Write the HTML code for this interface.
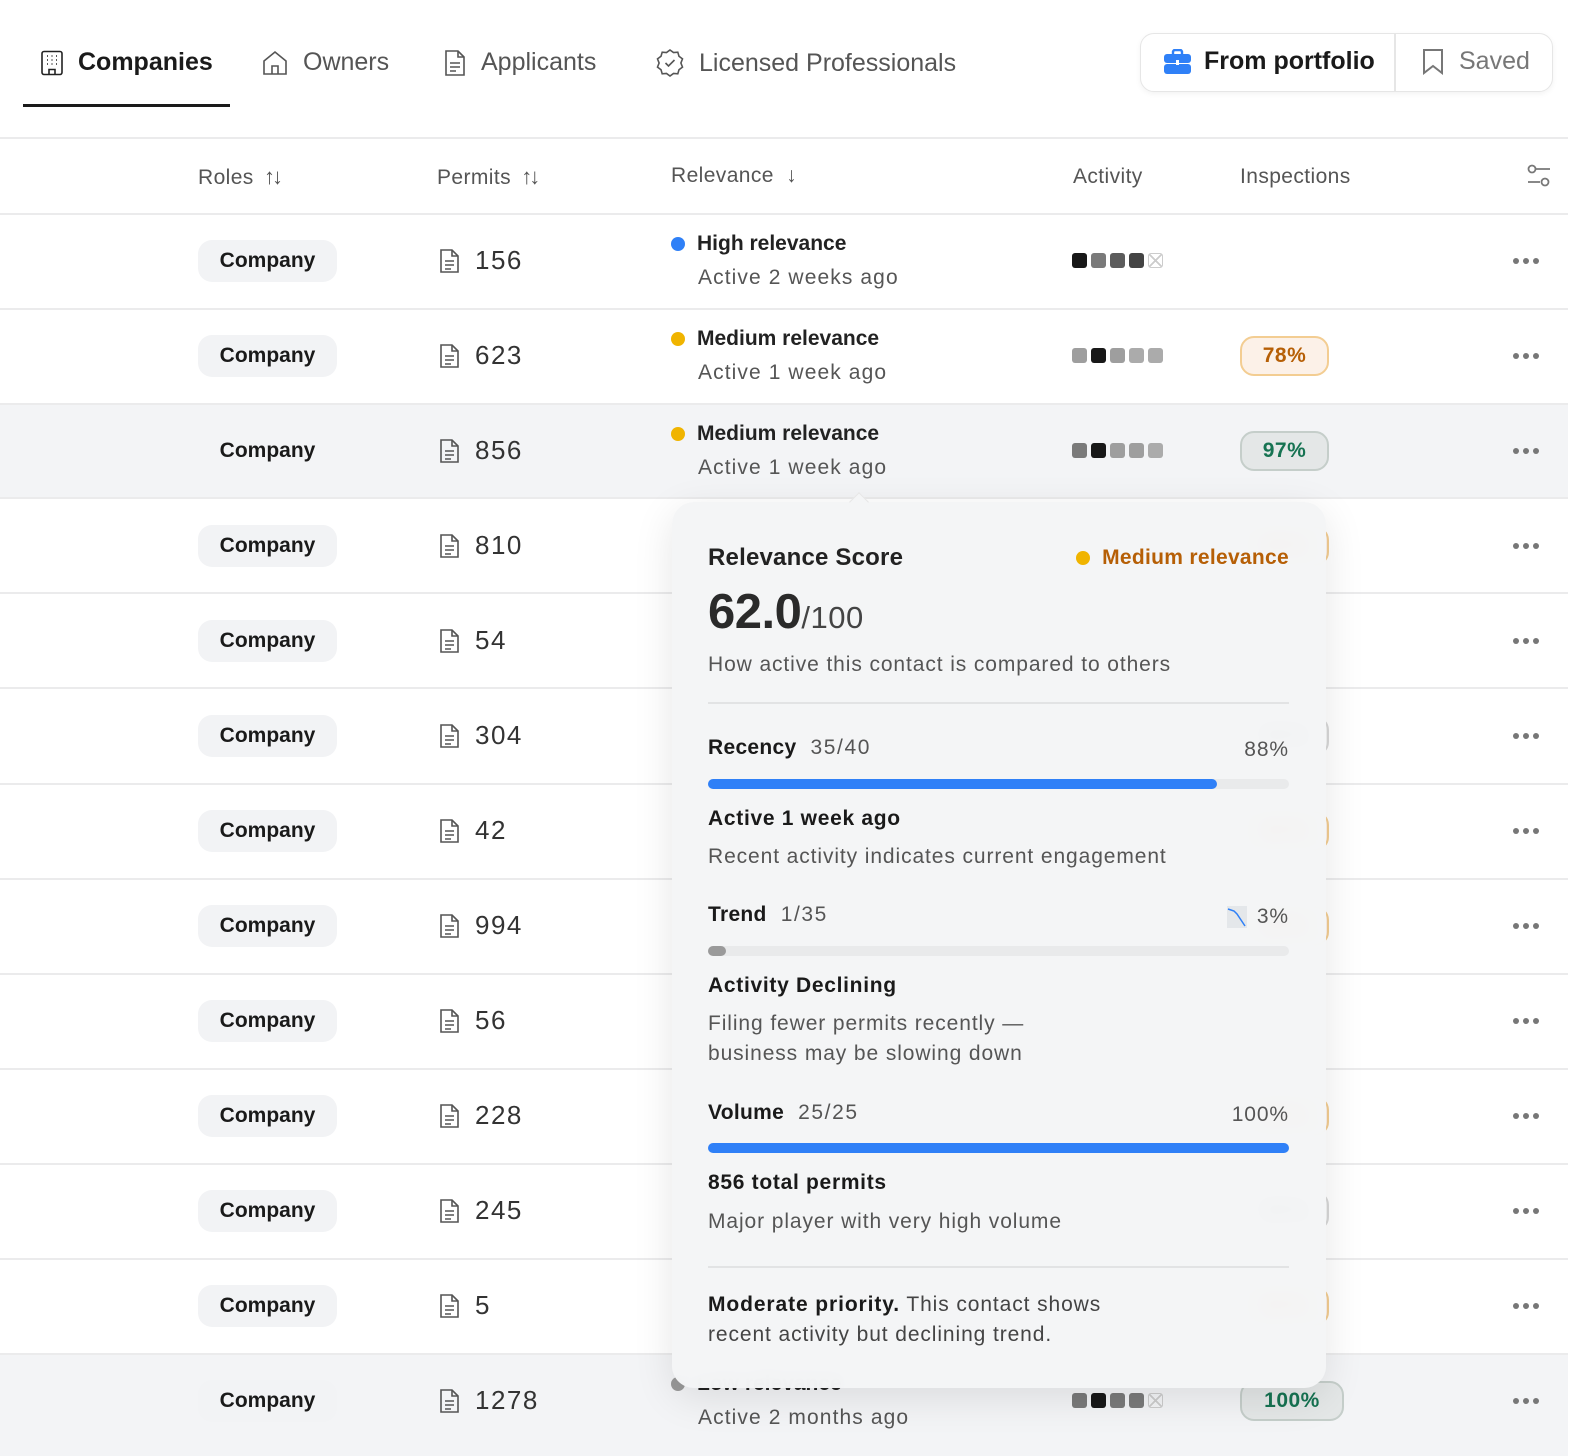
<!DOCTYPE html>
<html><head><meta charset="utf-8"><style>
*{box-sizing:border-box;margin:0;padding:0}
body{width:1580px;height:1456px;overflow:hidden;background:#fff;font-family:"Liberation Sans",sans-serif;color:#1a1a1a;position:relative}
.a{position:absolute}
.tab{position:absolute;top:48px;font-size:25px;color:#555;display:flex;align-items:center;gap:14px;white-space:nowrap}
.tab svg{stroke:#555;fill:none;stroke-width:1.6}
.sep{position:absolute;left:0;width:1568px;height:2px;background:#ebebec}
.row{position:absolute;left:0;width:1568px;height:95px}
.pill{position:absolute;left:198px;width:139px;height:42px;border-radius:14px;background:#f2f3f5;font-weight:bold;font-size:21px;display:flex;align-items:center;justify-content:center;color:#1a1a1a}
.perm{position:absolute;left:439px;display:flex;align-items:center;gap:14px;font-size:26px;color:#333;letter-spacing:1.5px}
.perm svg{stroke:#555;fill:none;stroke-width:1.6}
.rel1{position:absolute;left:671px;font-size:21px;font-weight:bold;color:#222;display:flex;align-items:center;gap:12px}
.dot{width:14px;height:14px;border-radius:50%}
.rel2{position:absolute;left:698px;font-size:21px;color:#555;letter-spacing:1.1px}
.act{position:absolute;left:1072px;display:flex;gap:4px}
.act i{display:block;width:15px;height:15px;border-radius:3px}
.k{background:#181818}.g1{background:#7a7a7a}.g2{background:#5c5c5c}.g3{background:#444}.g4{background:#9e9e9e}.g5{background:#ababab}
.x{border:1.5px solid #ccc;background:linear-gradient(45deg,transparent 45%,#ccc 45%,#ccc 55%,transparent 55%),linear-gradient(-45deg,transparent 45%,#ccc 45%,#ccc 55%,transparent 55%)}
.badge{position:absolute;left:1240px;width:89px;height:40px;border-radius:14px;font-size:21px;font-weight:bold;display:flex;align-items:center;justify-content:center;letter-spacing:.5px}
.or{background:#fcf1e8;border:2px solid #f3cd92;color:#b65f06}
.gr{background:#e4e7e7;border:2px solid #c5ceca;color:#167352}
.gy{background:#f2f3f3;border:2px solid #d8d8d8;color:#555}
.more{position:absolute;left:1513px;display:flex;gap:4px}
.more i{display:block;width:6px;height:6px;border-radius:50%;background:#777}
.pop{position:absolute;left:672px;top:502px;width:654px;height:886px;border-radius:22px;background:rgba(244,245,246,0.97);box-shadow:0 10px 40px rgba(0,0,0,0.10);backdrop-filter:blur(8px)}
.pop .a{white-space:nowrap}
.bar{position:absolute;left:36px;width:581px;height:10px;border-radius:5px;background:#e9eaeb}
.bar b{display:block;height:10px;border-radius:5px;background:#2f80f7}
.lbl{font-size:21px;color:#1a1a1a;font-weight:bold;letter-spacing:.3px}
.lbl span{font-weight:normal;color:#555;margin-left:14px;letter-spacing:1.6px}
.body{font-size:21px;color:#555;line-height:30px;letter-spacing:.9px}
.bb{font-size:21px;color:#1a1a1a;font-weight:bold;letter-spacing:.7px}
</style></head><body>

<div class="tab" style="left:40px;color:#1a1a1a;font-weight:bold"><svg width="24" height="26" viewBox="0 0 24 26" style="stroke:#222"><rect x="2" y="1.5" width="20" height="23" rx="2"/><path d="M7 6h1M11.5 6h1M16 6h1M7 10h1M11.5 10h1M16 10h1M7 14h1M11.5 14h1M16 14h1M9 24.5v-5h6v5"/></svg>Companies</div>
<div class="a" style="left:23px;top:104px;width:207px;height:3px;background:#1a1a1a"></div>
<div class="tab" style="left:261px"><svg width="28" height="26" viewBox="0 0 28 26"><path d="M3 11L14 2l11 9v13H3z"/><path d="M11 24v-8h6v8"/></svg>Owners</div>
<div class="tab" style="left:443px"><svg width="24" height="28" viewBox="0 0 24 28"><path d="M3 2h12l6 6v18H3z"/><path d="M15 2v6h6M7 14h10M7 18h10M7 22h6"/></svg>Applicants</div>
<div class="tab" style="left:655px"><svg width="30" height="30" viewBox="0 0 30 30"><path d="M15 2l3.5 2.5 4.3-.3 1.2 4.1 3.5 2.6-1.6 4.1 1.6 4.1-3.5 2.6-1.2 4.1-4.3-.3L15 28l-3.5-2.5-4.3.3-1.2-4.1-3.5-2.6L4.1 15 2.5 10.9 6 8.3l1.2-4.1 4.3.3z"/><path d="M10.5 15l3 3 6-6"/></svg>Licensed Professionals</div>

<div class="a" style="left:1140px;top:33px;width:413px;height:59px;border:1.5px solid #e6e6e6;border-radius:14px;box-shadow:0 2px 6px rgba(0,0,0,.05);background:#fff"></div>
<div class="a" style="left:1394px;top:34px;width:1.5px;height:57px;background:#e6e6e6"></div>
<div class="a" style="left:1164px;top:47px;display:flex;align-items:center;gap:13px;font-size:25px;font-weight:bold;color:#1a1a1a"><svg width="27" height="25" viewBox="0 0 27 25"><path d="M9 5V3a2 2 0 012-2h5a2 2 0 012 2v2" stroke="#2f80f7" stroke-width="2.4" fill="none"/><rect x="0" y="5" width="27" height="9" rx="3" fill="#2f80f7"/><rect x="0" y="15" width="27" height="10" rx="3" fill="#2f80f7"/><rect x="12" y="11" width="3" height="5" fill="#fff"/></svg>From portfolio</div>
<div class="a" style="left:1421px;top:47px;display:flex;align-items:center;gap:14px;font-size:25px;color:#777"><svg width="24" height="27" viewBox="0 0 24 27" fill="none" stroke="#777" stroke-width="2"><path d="M3 2h18v23l-9-7-9 7z"/></svg>Saved</div>

<div class="sep" style="top:137px"></div>
<div class="a" style="left:198px;top:164px;font-size:21px;color:#555;letter-spacing:.4px">Roles <span style="margin-left:4px;letter-spacing:-3px;font-size:22px">↑↓</span></div>
<div class="a" style="left:437px;top:164px;font-size:21px;color:#555;letter-spacing:.4px">Permits <span style="margin-left:4px;letter-spacing:-3px;font-size:22px">↑↓</span></div>
<div class="a" style="left:671px;top:164px;font-size:21px;color:#555;letter-spacing:.4px">Relevance <span style="margin-left:6px">↓</span></div>
<div class="a" style="left:1073px;top:165px;font-size:21px;color:#555;letter-spacing:.4px">Activity</div>
<div class="a" style="left:1240px;top:165px;font-size:21px;color:#555;letter-spacing:.4px">Inspections</div>
<svg class="a" style="left:1527px;top:164px" width="24" height="24" viewBox="0 0 24 24" fill="none" stroke="#777" stroke-width="1.8"><circle cx="5" cy="5" r="3.5"/><path d="M9 5h14M1 18h12"/><circle cx="18" cy="18" r="3.5"/></svg>
<div class="sep" style="top:213px"></div>

<div class="row" style="top:404px;height:94px;background:#f3f4f6"></div>
<div class="row" style="top:1355px;height:101px;background:#f3f4f6"></div>

<div class="sep" style="top:308px"></div><div class="sep" style="top:403px"></div><div class="sep" style="top:497px"></div><div class="sep" style="top:592px"></div><div class="sep" style="top:687px"></div><div class="sep" style="top:783px"></div><div class="sep" style="top:878px"></div><div class="sep" style="top:973px"></div><div class="sep" style="top:1068px"></div><div class="sep" style="top:1163px"></div><div class="sep" style="top:1258px"></div><div class="sep" style="top:1353px"></div>

<div class="pill" style="top:240px">Company</div>
<div class="pill" style="top:335px">Company</div>
<div class="pill" style="top:430px;background:transparent">Company</div>
<div class="pill" style="top:525px">Company</div>
<div class="pill" style="top:620px">Company</div>
<div class="pill" style="top:715px">Company</div>
<div class="pill" style="top:810px">Company</div>
<div class="pill" style="top:905px">Company</div>
<div class="pill" style="top:1000px">Company</div>
<div class="pill" style="top:1095px">Company</div>
<div class="pill" style="top:1190px">Company</div>
<div class="pill" style="top:1285px">Company</div>
<div class="pill" style="top:1380px">Company</div>

<svg width="0" height="0" style="position:absolute"><defs><symbol id="doc" viewBox="0 0 22 26"><path d="M2 2h11l6 6v16H2z"/><path d="M13 2v6h6M6 13h9M6 17h9M6 21h6"/></symbol></defs></svg>
<div class="perm" style="top:245px"><svg width="22" height="26"><use href="#doc"/></svg>156</div>
<div class="perm" style="top:340px"><svg width="22" height="26"><use href="#doc"/></svg>623</div>
<div class="perm" style="top:435px"><svg width="22" height="26"><use href="#doc"/></svg>856</div>
<div class="perm" style="top:530px"><svg width="22" height="26"><use href="#doc"/></svg>810</div>
<div class="perm" style="top:625px"><svg width="22" height="26"><use href="#doc"/></svg>54</div>
<div class="perm" style="top:720px"><svg width="22" height="26"><use href="#doc"/></svg>304</div>
<div class="perm" style="top:815px"><svg width="22" height="26"><use href="#doc"/></svg>42</div>
<div class="perm" style="top:910px"><svg width="22" height="26"><use href="#doc"/></svg>994</div>
<div class="perm" style="top:1005px"><svg width="22" height="26"><use href="#doc"/></svg>56</div>
<div class="perm" style="top:1100px"><svg width="22" height="26"><use href="#doc"/></svg>228</div>
<div class="perm" style="top:1195px"><svg width="22" height="26"><use href="#doc"/></svg>245</div>
<div class="perm" style="top:1290px"><svg width="22" height="26"><use href="#doc"/></svg>5</div>
<div class="perm" style="top:1385px"><svg width="22" height="26"><use href="#doc"/></svg>1278</div>

<div class="rel1" style="top:232px"><div class="dot" style="background:#2f80f7"></div>High relevance</div>
<div class="rel2" style="top:266px">Active 2 weeks ago</div>
<div class="rel1" style="top:327px"><div class="dot" style="background:#f0b400"></div>Medium relevance</div>
<div class="rel2" style="top:361px">Active 1 week ago</div>
<div class="rel1" style="top:422px"><div class="dot" style="background:#f0b400"></div>Medium relevance</div>
<div class="rel2" style="top:456px">Active 1 week ago</div>
<div class="rel1" style="top:1372px"><div class="dot" style="background:#999"></div>Low relevance</div>
<div class="rel2" style="top:1406px">Active 2 months ago</div>

<div class="act" style="top:253px"><i class="k"></i><i class="g1"></i><i class="g2"></i><i class="g3"></i><i class="x"></i></div>
<div class="act" style="top:348px"><i class="g4"></i><i class="k"></i><i class="g4"></i><i class="g5"></i><i class="g5"></i></div>
<div class="act" style="top:443px"><i class="g1"></i><i class="k"></i><i class="g4"></i><i class="g4"></i><i class="g5"></i></div>
<div class="act" style="top:1393px"><i class="g1"></i><i class="k"></i><i class="g1"></i><i class="g1"></i><i class="x"></i></div>

<div class="badge or" style="top:336px">78%</div>
<div class="badge gr" style="top:431px">97%</div>
<div class="badge or" style="top:526px">88%</div>
<div class="badge gy" style="top:716px">90%</div>
<div class="badge or" style="top:811px">80%</div>
<div class="badge or" style="top:906px">80%</div>
<div class="badge or" style="top:1096px">80%</div>
<div class="badge gy" style="top:1191px">90%</div>
<div class="badge or" style="top:1286px">80%</div>
<div class="badge gr" style="top:1381px;width:104px">100%</div>

<div class="more" style="top:258px"><i></i><i></i><i></i></div>
<div class="more" style="top:353px"><i></i><i></i><i></i></div>
<div class="more" style="top:448px"><i></i><i></i><i></i></div>
<div class="more" style="top:543px"><i></i><i></i><i></i></div>
<div class="more" style="top:638px"><i></i><i></i><i></i></div>
<div class="more" style="top:733px"><i></i><i></i><i></i></div>
<div class="more" style="top:828px"><i></i><i></i><i></i></div>
<div class="more" style="top:923px"><i></i><i></i><i></i></div>
<div class="more" style="top:1018px"><i></i><i></i><i></i></div>
<div class="more" style="top:1113px"><i></i><i></i><i></i></div>
<div class="more" style="top:1208px"><i></i><i></i><i></i></div>
<div class="more" style="top:1303px"><i></i><i></i><i></i></div>
<div class="more" style="top:1398px"><i></i><i></i><i></i></div>

<div class="pop">
  <div class="a" style="left:180px;top:-7px;width:14px;height:14px;background:rgba(244,245,246,1);transform:rotate(45deg);border-left:1px solid #e6e6e6;border-top:1px solid #e6e6e6"></div>
  <div class="a" style="left:36px;top:42px;font-size:24px;font-weight:bold;color:#222;letter-spacing:.2px">Relevance Score</div>
  <div class="a" style="right:37px;top:44px;font-size:21px;font-weight:bold;color:#b65f06;display:flex;align-items:center;gap:12px;letter-spacing:.3px"><div class="dot" style="background:#f0b400"></div>Medium relevance</div>
  <div class="a" style="left:36px;top:82px;font-size:49px;font-weight:bold;color:#2a2a2a;letter-spacing:-.5px">62.0<span style="font-size:31px;font-weight:normal;color:#444;letter-spacing:.5px">/100</span></div>
  <div class="a body" style="left:36px;top:148px">How active this contact is compared to others</div>
  <div class="a" style="left:36px;top:200px;width:581px;height:2px;background:#e2e3e4"></div>

  <div class="a lbl" style="left:36px;top:234px">Recency<span>35/40</span></div>
  <div class="a body" style="right:37px;top:233px">88%</div>
  <div class="bar" style="top:277px"><b style="width:509px"></b></div>
  <div class="a bb" style="left:36px;top:305px">Active 1 week ago</div>
  <div class="a body" style="left:36px;top:340px">Recent activity indicates current engagement</div>

  <div class="a lbl" style="left:36px;top:401px">Trend<span>1/35</span></div>
  <div class="a body" style="right:37px;top:400px;display:flex;align-items:center;gap:10px"><svg width="20" height="22" viewBox="0 0 20 22"><rect width="20" height="22" fill="#e4e7ea"/><path d="M1 3l6 2 3 3 8 12" stroke="#2f80f7" stroke-width="1.5" fill="none"/></svg>3%</div>
  <div class="bar" style="top:444px"><b style="width:18px;background:#9a9a9a"></b></div>
  <div class="a bb" style="left:36px;top:472px">Activity Declining</div>
  <div class="a body" style="left:36px;top:507px">Filing fewer permits recently —<br>business may be slowing down</div>

  <div class="a lbl" style="left:36px;top:599px">Volume<span>25/25</span></div>
  <div class="a body" style="right:37px;top:598px">100%</div>
  <div class="bar" style="top:641px"><b style="width:581px"></b></div>
  <div class="a bb" style="left:36px;top:669px">856 total permits</div>
  <div class="a body" style="left:36px;top:705px">Major player with very high volume</div>
  <div class="a" style="left:36px;top:764px;width:581px;height:2px;background:#e2e3e4"></div>
  <div class="a body" style="left:36px;top:788px;color:#444"><b style="color:#1a1a1a">Moderate priority.</b> This contact shows<br>recent activity but declining trend.</div>
</div>
</body></html>
